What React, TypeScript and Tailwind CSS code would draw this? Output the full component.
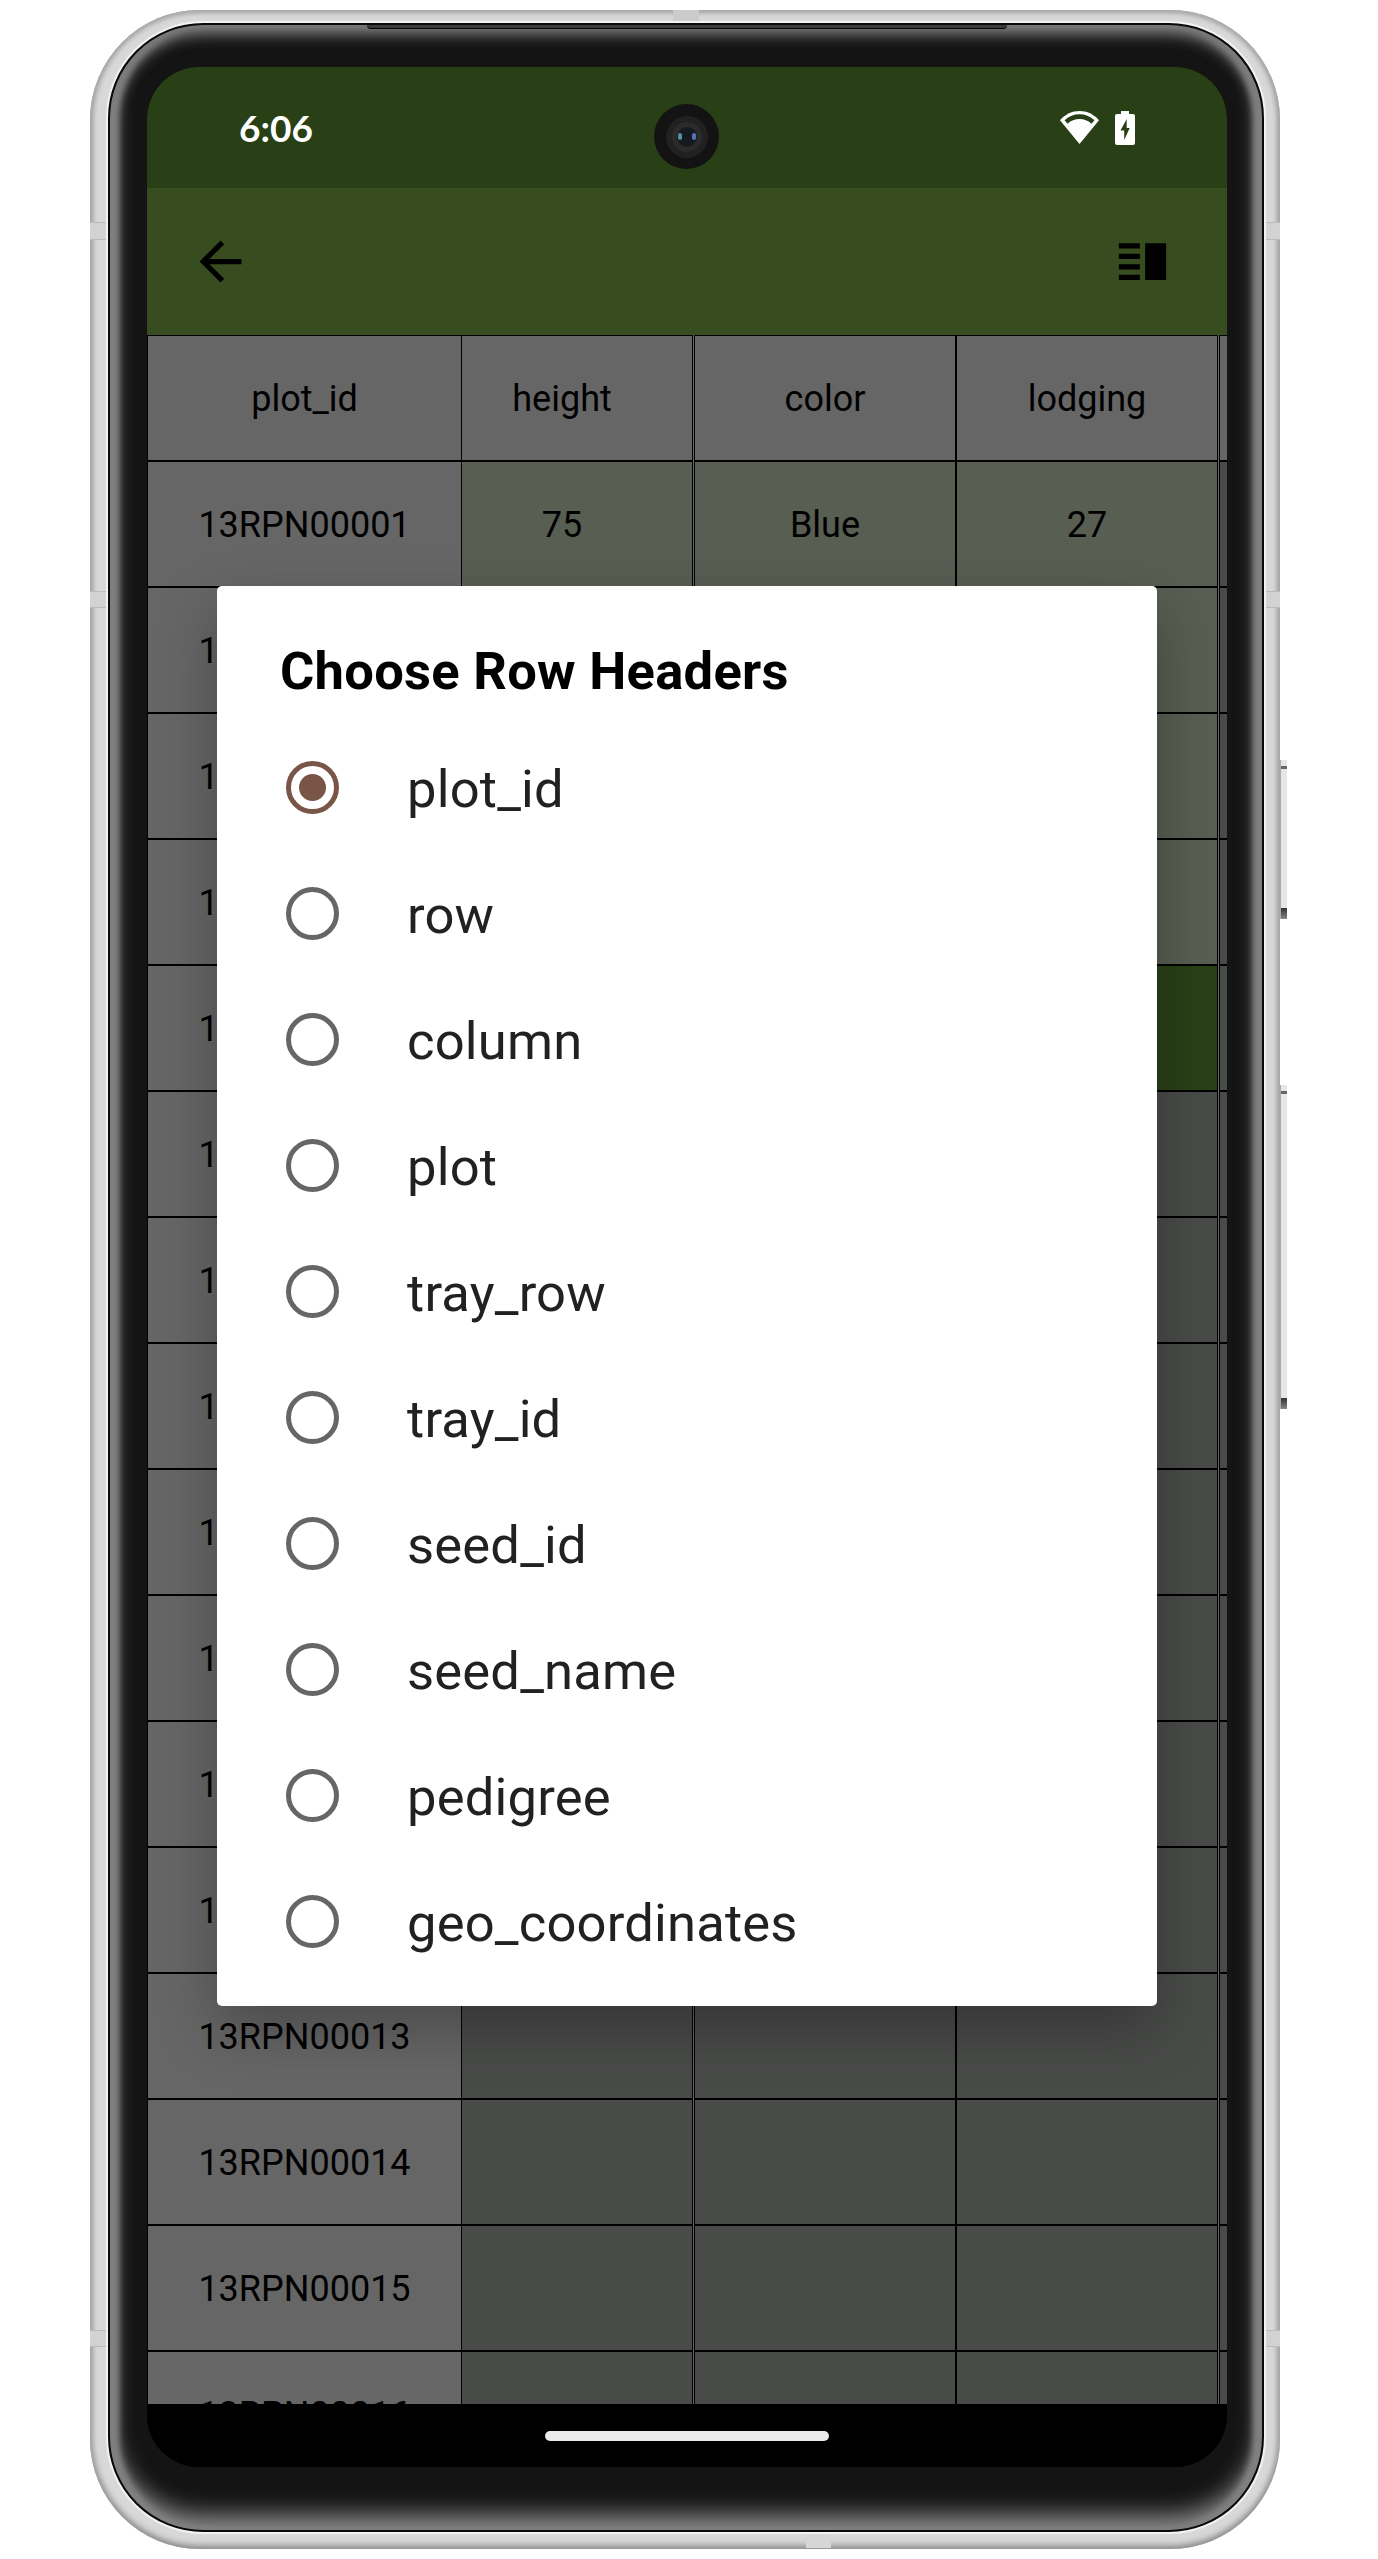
const options = ["plot_id", "row", "column", "plot", "tray_row", "tray_id", "seed_id", "seed_name", "pedigree", "geo_coordinates"];

const traits = [["75", "Blue", "27"]];
const observedRows = 4;
const activeRow = 5;

const rows = Array.from({ length: 16 }, (_, i) => ({
  n: i + 1,
  id: "13RPN" + String(i + 1).padStart(5, "0"),
  values: traits[i] ?? ["", "", ""],
}));

function BackIcon() {
  return (
    <svg viewBox="0 0 24 24" className="size-[63px]" fill="#000">
      <path d="M20 11H7.83l5.59-5.59L12 4l-8 8 8 8 1.41-1.41L7.83 13H20v-2z" />
    </svg>
  );
}

function SplitIcon() {
  return (
    <svg viewBox="0 0 24 24" className="size-[63px]" fill="#000">
      <path d="M3 15h8v-2H3v2zm0 4h8v-2H3v2zm0-8h8V9H3v2zm0-6v2h8V5H3zm10 0h8v14h-8V5z" />
    </svg>
  );
}

function WifiIcon() {
  return (
    <svg viewBox="0 0 39 33" className="h-[33px] w-[39px]">
      <path d="M19.5 33 0 9.2C5.3 3.2 12 0 19.5 0S33.700 3.200 39 9.200Z" fill="#fff" />
      <path d="M4.600 9.200C9 5.200 14 3.300 19.500 3.300S30 5.200 34.400 9.200L31.500 12.700C28 9.500 24 8 19.500 8S11 9.500 7.500 12.700Z" fill="#294017" />
    </svg>
  );
}

function BatteryIcon() {
  return (
    <svg viewBox="0 0 20 34" className="h-[34px] w-[20px]">
      <path d="M6 0h8v3h4q2 0 2 2v27q0 2-2 2H2q-2 0-2-2V5q0-2 2-2h4Z" fill="#fff" />
      <path d="M11.700 8 5.500 19.500h3.700V29L14.700 17h-3Z" fill="#294017" />
    </svg>
  );
}

function Camera() {
  return (
    <div className="absolute left-[507px] top-[37px] flex size-[65px] items-center justify-center rounded-full bg-[#131313]">
      <div className="flex size-[42px] items-center justify-center rounded-full bg-[#212121]">
        <div className="flex size-[30px] items-center justify-center rounded-full bg-[#2b2b2b]">
          <div className="flex h-[20px] w-[20px] items-center justify-between rounded-full bg-[#141a20] px-px">
            <span className="h-[7px] w-[4px] rounded-full bg-[#559096] blur-[0.5px]" />
            <span className="h-[7px] w-[4px] rounded-full bg-[#5674b5] blur-[0.5px]" />
          </div>
        </div>
      </div>
    </div>
  );
}

function Cell({ text, className }: { text: string; className: string }) {
  return (
    <div className={"flex h-[126px] shrink-0 items-center justify-center border-y border-black pt-[2px] text-[36px] leading-none text-black " + className}>
      {text}
    </div>
  );
}

function Row({ cells, tones }: { cells: string[]; tones: string[] }) {
  return (
    <div className="flex h-[126px] shrink-0">
      <Cell text={cells[0]} className="w-[315px] border-x bg-[#666]" />
      <Cell text={cells[1]} className={"w-[231px] border-r pr-[30px] " + tones[0]} />
      <div className="w-px shrink-0 bg-[#666]" />
      <Cell text={cells[2]} className={"w-[262px] border-x " + tones[1]} />
      <Cell text={cells[3]} className={"w-[262px] border-x " + tones[2]} />
      <div className="w-px shrink-0 bg-[#666]" />
      <Cell text="" className={"w-[200px] border-l " + tones[3]} />
    </div>
  );
}

const header = "bg-[#666]";
const filled = "bg-[#585e52]";
const blank = "bg-[#494b49]";
const active = "bg-[#294017]";

function Radio({ checked }: { checked: boolean }) {
  return (
    <span className={"flex size-[53px] items-center justify-center rounded-full border-[5px] " + (checked ? "border-[#795548]" : "border-[#666]")}>
      {checked && <span className="size-[27px] rounded-full bg-[#795548]" />}
    </span>
  );
}

function Dialog() {
  return (
    <div className="absolute left-[70px] top-[519px] flex h-[1420px] w-[940px] flex-col rounded-[5px] bg-white pt-[52px] shadow-[0_24px_60px_rgba(0,0,0,0.28)]">
      <h1 className="h-[86px] pl-[63px] text-[52.5px] font-bold leading-[66px] tracking-[0.27px] text-black">Choose Row Headers</h1>
      {options.map((o, i) => (
        <label key={o} className="flex h-[126px] items-center pl-[69px]">
          <Radio checked={i === 0} />
          <span className="pl-[68px] pt-[4px] text-[52.5px] leading-none tracking-[0.2px] text-[#212121]">{o}</span>
        </label>
      ))}
    </div>
  );
}

function Screen() {
  return (
    <div className="relative flex h-[2400px] w-[1080px] flex-col overflow-hidden rounded-[52px] bg-black font-[Roboto,sans-serif]">
      <div className="flex h-[121px] shrink-0 items-center bg-[#294017] pl-[92px] pr-[92px]">
        <span className="font-[Lato,sans-serif] text-[37px] font-bold leading-none text-white">6:06</span>
        <div className="ml-auto flex items-center gap-[16px]">
          <WifiIcon />
          <BatteryIcon />
        </div>
      </div>
      <Camera />
      <div className="flex h-[147px] shrink-0 items-center justify-between bg-[#384d1f] pl-[42px] pr-[53px]">
        <BackIcon />
        <SplitIcon />
      </div>
      <div className="flex h-[2069px] shrink-0 flex-col overflow-hidden">
        <Row cells={["plot_id", "height", "color", "lodging"]} tones={[header, header, header, header]} />
        {rows.map((r) => {
          const tone = r.n <= observedRows ? filled : blank;
          return <Row key={r.id} cells={[r.id, ...r.values]} tones={[tone, tone, r.n === activeRow ? active : tone, blank]} />;
        })}
      </div>
      <div className="flex h-[63px] shrink-0 items-center justify-center bg-black">
        <div className="h-[10px] w-[284px] rounded-full bg-[#ebebeb]" />
      </div>
      <Dialog />
    </div>
  );
}

function Antennas() {
  return (
    <>
      <i className="absolute left-0 top-[212px] h-[18px] w-[18px] border-y border-[#bbb] bg-[#d2d2d2]" />
      <i className="absolute left-0 top-[581px] h-[17px] w-[18px] border-y border-[#bbb] bg-[#d2d2d2]" />
      <i className="absolute left-0 top-[2320px] h-[17px] w-[18px] border-y border-[#bbb] bg-[#d2d2d2]" />
      <i className="absolute right-0 top-[212px] h-[18px] w-[16px] border-y border-[#bbb] bg-[#d2d2d2]" />
      <i className="absolute right-0 top-[581px] h-[17px] w-[16px] border-y border-[#bbb] bg-[#d2d2d2]" />
      <i className="absolute right-0 top-[2320px] h-[17px] w-[16px] border-y border-[#bbb] bg-[#d2d2d2]" />
      <i className="absolute left-[583px] top-0 h-[15px] w-[26px] bg-[#cbcbcb]" />
      <i className="absolute bottom-[1px] left-[716px] h-[16px] w-[25px] bg-[#d6d6d6]" />
    </>
  );
}

function SideButton({ className }: { className: string }) {
  return (
    <div className={"absolute -right-[7px] flex w-[7px] flex-col border-l border-[#aaa] bg-[#e6e6e6] " + className}>
      <div className="mt-[6px] h-[3px] bg-[#666]" />
      <div className="mt-auto h-[11px] bg-linear-to-b from-[#333] to-[#888]" />
    </div>
  );
}

export default function App() {
  return (
    <main className="flex h-[2559px] w-[1378px] bg-white pl-[90px] pt-[10px]">
      <div className="relative h-[2539px] w-[1190px] rounded-[110px] bg-[#d8d8d8] pl-[18px] pt-[13px] shadow-[inset_0_3px_5px_#aaa,inset_0_-3px_7px_#888,inset_3px_0_5px_#bbb,inset_-3px_0_5px_#bbb]">
        <Antennas />
        <SideButton className="top-[750px] h-[159px]" />
        <SideButton className="top-[1075px] h-[324px]" />
        <div className="relative h-[2509px] w-[1156px] rounded-[95px] border-2 border-[#0a0a0a] bg-[#141414] pl-[37px] pt-[42px] shadow-[0_0_1px_2px_#f4f4f4,inset_0_6px_14px_4px_#777,inset_0_-14px_22px_2px_#858585,inset_8px_0_6px_#999,inset_-8px_0_6px_#999]">
          <i className="absolute left-[257px] top-0 h-[4px] w-[640px] rounded-b border-b border-black bg-[#3c3c3c]" />
          <Screen />
        </div>
      </div>
    </main>
  );
}
